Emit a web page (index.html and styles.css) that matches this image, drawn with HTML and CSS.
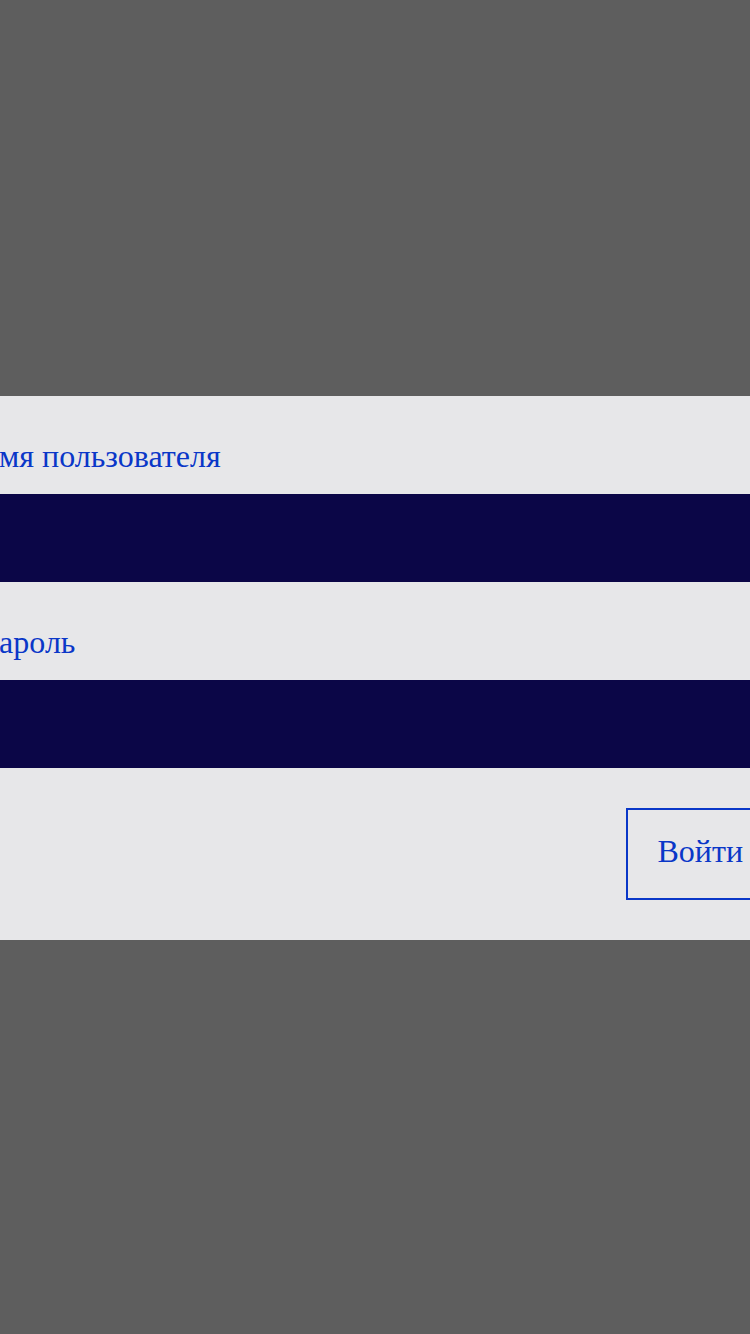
FILE: index.html
```html
<!DOCTYPE html>
<html lang="ru">
<head>
<meta charset="utf-8">
<title>Вход</title>
<link rel="stylesheet" href="styles.css">
</head>
<body>
<main class="screen">
  <form class="panel">
    <div class="form">
      <label class="label" for="user">Имя пользователя</label>
      <input class="field" id="user" type="text">
      <label class="label label-second" for="pass">Пароль</label>
      <input class="field" id="pass" type="password">
      <div class="actions">
        <button class="btn" type="button">Войти</button>
      </div>
    </div>
  </form>
</main>
</body>
</html>
```

FILE: styles.css
```css
html, body {
  margin: 0;
  padding: 0;
  height: 100%;
  overflow: hidden;
  background: #5e5e5e;
}

.screen {
  box-sizing: border-box;
  height: 1334px;
  width: 750px;
  padding-top: 2px;
  display: flex;
  align-items: center;
  justify-content: center;
}

.panel {
  width: 750px;
  background: #e7e7e9;
  padding: 40px 0;
  display: flex;
  justify-content: center;
  margin: 0;
}

.form {
  flex: 0 0 798px;
  width: 798px;
  display: flex;
  flex-direction: column;
  font-family: "Liberation Serif", "Times New Roman", serif;
  font-size: 32px;
}

.label {
  display: block;
  line-height: 40px;
  color: #0a37c8;
  margin-bottom: 18px;
}

.label-second {
  margin-top: 40px;
}

.field {
  display: block;
  box-sizing: border-box;
  width: 100%;
  height: 88px;
  margin: 0;
  border: none;
  padding: 0;
  background: #0b0647;
  outline: none;
}

.actions {
  display: flex;
  justify-content: flex-end;
  margin-top: 40px;
}

.btn {
  font-family: "Liberation Serif", "Times New Roman", serif;
  font-size: 32px;
  line-height: 40px;
  color: #0a37c8;
  background: transparent;
  border: 2px solid #0a37c8;
  border-radius: 0;
  padding: 21px 29px 27px;
  margin: 0;
}
```
